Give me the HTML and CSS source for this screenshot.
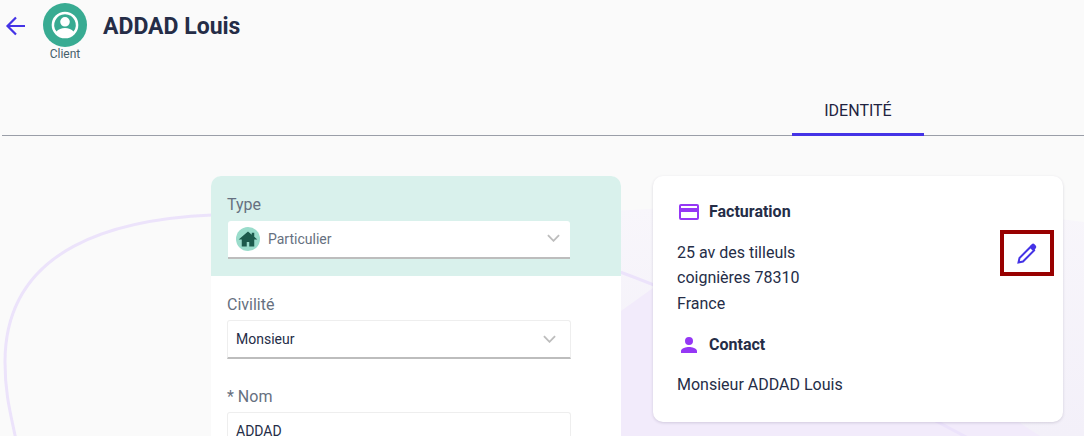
FILE: index.html
```html
<!DOCTYPE html>
<html lang="fr">
<head>
<meta charset="utf-8">
<title>ADDAD Louis</title>
<link rel="stylesheet" href="styles.css">
</head>
<body>
<svg class="bg" viewBox="0 0 1084 436" width="1084" height="436" aria-hidden="true">
  <defs>
    <linearGradient id="tint" x1="0" y1="0" x2="0" y2="1">
      <stop offset="0" stop-color="#f8f6fb"/>
      <stop offset="1" stop-color="#f3f0f9"/>
    </linearGradient>
  </defs>
  <path class="blob" d="M600 212C760 200 960 205 1084 222L1084 436L600 436Z"/>
  <path class="blob-deep" d="M600 326L653 288C760 320 930 370 1020 423L1040 436L600 436Z"/>
  <path class="line" d="M212 215C120 219 5 245 5 362C5 395 11 415 16 440"/>
  <path class="line" d="M600 265C700 298 850 375 968 438"/>
</svg>
<header class="top">
  <svg class="back" viewBox="0 0 24 24"><path d="M21 12H4M12 3.500L3.500 12l8.500 8.500"/></svg>
  <div class="who">
    <div class="avatar">
      <svg viewBox="0 0 24 24" width="32" height="32"><path fill="#fff" d="M12 2a10 10 0 1 0 0 20 10 10 0 0 0 0-20zm0 1.900a8.100 8.100 0 0 1 6.400 13c-1.300-1.700-3.900-2.600-6.400-2.600s-5.100.9-6.400 2.600a8.100 8.100 0 0 1 6.400-13zm0 2.100a3.600 3.600 0 1 0 0 7.200 3.600 3.600 0 0 0 0-7.200z"/></svg>
    </div>
    <span class="role">Client</span>
  </div>
  <h1>ADDAD Louis</h1>
</header>
<nav class="tabs"><a class="tab">IDENTITÉ</a></nav>
<main class="content">
  <section class="form">
    <div class="band">
      <label class="lbl">Type</label>
      <div class="select sel-type">
        <span class="ico-home"><svg viewBox="0 0 24 24" width="20" height="20"><path fill="#1c5a4c" d="M12 3L.8 12.500h3.700V21h6v-5.500h3V21h6v-8.500h3.700L19.500 9.400V4.500h-3v2.400z"/></svg></span>
        <span class="muted">Particulier</span>
        <svg class="chev" viewBox="0 0 14 8"><path d="M1 1l6 6 6-6"/></svg>
      </div>
    </div>
    <div class="fields">
      <label class="lbl">Civilité</label>
      <div class="select"><span>Monsieur</span><svg class="chev c2" viewBox="0 0 14 8"><path d="M1 1l6 6 6-6"/></svg></div>
      <label class="lbl lbl-nom">* Nom</label>
      <div class="select"><span>ADDAD</span></div>
    </div>
  </section>
  <section class="card">
    <div class="info">
      <h2><svg class="hi" viewBox="0 0 24 24"><path d="M20 4H4a2 2 0 0 0-2 2v12a2 2 0 0 0 2 2h16a2 2 0 0 0 2-2V6a2 2 0 0 0-2-2zm0 14H4v-6h16zm0-10H4V6h16z"/></svg>Facturation</h2>
      <p class="addr">25 av des tilleuls<br>coignières 78310<br>France</p>
      <h2 class="h-contact"><svg class="hi" viewBox="0 0 24 24"><path d="M12 12a4 4 0 1 0 0-8 4 4 0 0 0 0 8zm0 2c-2.700 0-8 1.300-8 4v2h16v-2c0-2.700-5.300-4-8-4z"/></svg>Contact</h2>
      <p class="contact">Monsieur ADDAD Louis</p>
    </div>
    <div class="edit"><svg viewBox="0 0 24 24" width="24" height="24"><path class="pen" d="M15.500 6L19 9.500 8 20.500l-4.500 1 1-4.500z"/><path class="pen-cap" d="M15 5l1.700-1.700a2 2 0 0 1 2.800 0l1.200 1.200a2 2 0 0 1 0 2.800L19 10z"/></svg></div>
  </section>
</main>
</body>
</html>
```
FILE: styles.css
```css
* { box-sizing: border-box; }
html, body { margin: 0; height: 436px; overflow: hidden; }
body { background: #fafafa; font-family: Roboto, "Liberation Sans", sans-serif; color: #252d47; position: relative; }
.bg { position: absolute; left: 0; top: 0; }
.blob { fill: url(#tint); stroke: none; }
.blob-deep { fill: #f2ebfb; stroke: none; }
.line { fill: none; stroke: #ece3fb; stroke-width: 3; }
.top { position: relative; display: flex; align-items: flex-start; height: 66px; padding: 3px 0 0 4px; }
.back { width: 24px; height: 24px; margin-top: 11px; fill: none; stroke: #4433e6; stroke-width: 2.200; }
.who { width: 60px; margin-left: 7px; display: flex; flex-direction: column; align-items: center; }
.avatar { width: 44px; height: 44px; border-radius: 50%; background: #38ab92; display: flex; align-items: center; justify-content: center; }
.role { font-size: 12px; line-height: 14px; color: #46606b; }
h1 { margin: 7px 0 0 8px; font-size: 23px; line-height: 34px; font-weight: 700; color: #252d47; }
.tabs { position: relative; height: 70px; margin-left: 2px; border-bottom: 1px solid #9a9ea8; padding-left: 790px; }
.tab { display: block; width: 132px; height: 70px; padding-top: 28px; text-align: center; font-size: 16px; line-height: 34px; color: #1f2340; border-bottom: 3px solid #4433e6; }
.content { position: relative; display: flex; align-items: flex-start; padding: 40px 0 0 211px; }
.form { width: 410px; height: 300px; background: #fff; border-radius: 10px 10px 0 0; overflow: hidden; }
.band { height: 100px; background: #d9f1ec; padding: 18px 16px 0; }
.lbl { display: block; font-size: 16px; line-height: 22px; color: #667080; }
.select { display: flex; align-items: center; width: 344px; height: 39px; margin-top: 4px; padding-left: 8px; background: #fff; border: 1px solid #eeeeee; border-bottom: 2px solid #bdbdbd; border-radius: 3px 3px 0 0; font-size: 14px; color: #252d47; }
.band .select { width: 342px; height: 38px; margin: 5px 0 0 1px; border: 0; border-bottom: 2px solid #bdbdbd; }
.ico-home { width: 24px; height: 24px; border-radius: 50%; background: #9adccb; display: flex; align-items: center; justify-content: center; margin-right: 8px; }
.muted { color: #667080; }
.chev { width: 13px; height: 8px; margin: 0 10px 3px auto; fill: none; stroke: #bdbdbd; stroke-width: 2; }
.c2 { margin: 0 14px 0 auto; }
.fields { padding: 18px 16px 0; }
.lbl-nom { margin-top: 27px; }
.card { position: relative; display: flex; width: 410px; height: 246px; margin-left: 32px; background: #fff; border-radius: 10px; box-shadow: 0 1px 3px rgba(60,50,90,.18); padding: 24px 9px 0 24px; }
.info { flex: 1; }
h2 { display: flex; align-items: center; margin: 0; font-size: 16px; line-height: 22px; font-weight: 700; color: #252d47; }
.hi { width: 24px; height: 24px; margin-right: 8px; fill: #9537f5; }
.addr { margin: 15.600px 0 0; font-size: 16px; line-height: 25.600px; }
.h-contact { margin-top: 16.400px; }
.contact { margin: 16px 0 0; font-size: 16px; line-height: 24px; }
.edit { width: 54px; height: 46px; margin-top: 30px; border: 4px solid #980000; display: flex; align-items: center; justify-content: center; }
.pen { fill: #fff; stroke: #4433e6; stroke-width: 2; }
.pen-cap { fill: #4433e6; }
```
